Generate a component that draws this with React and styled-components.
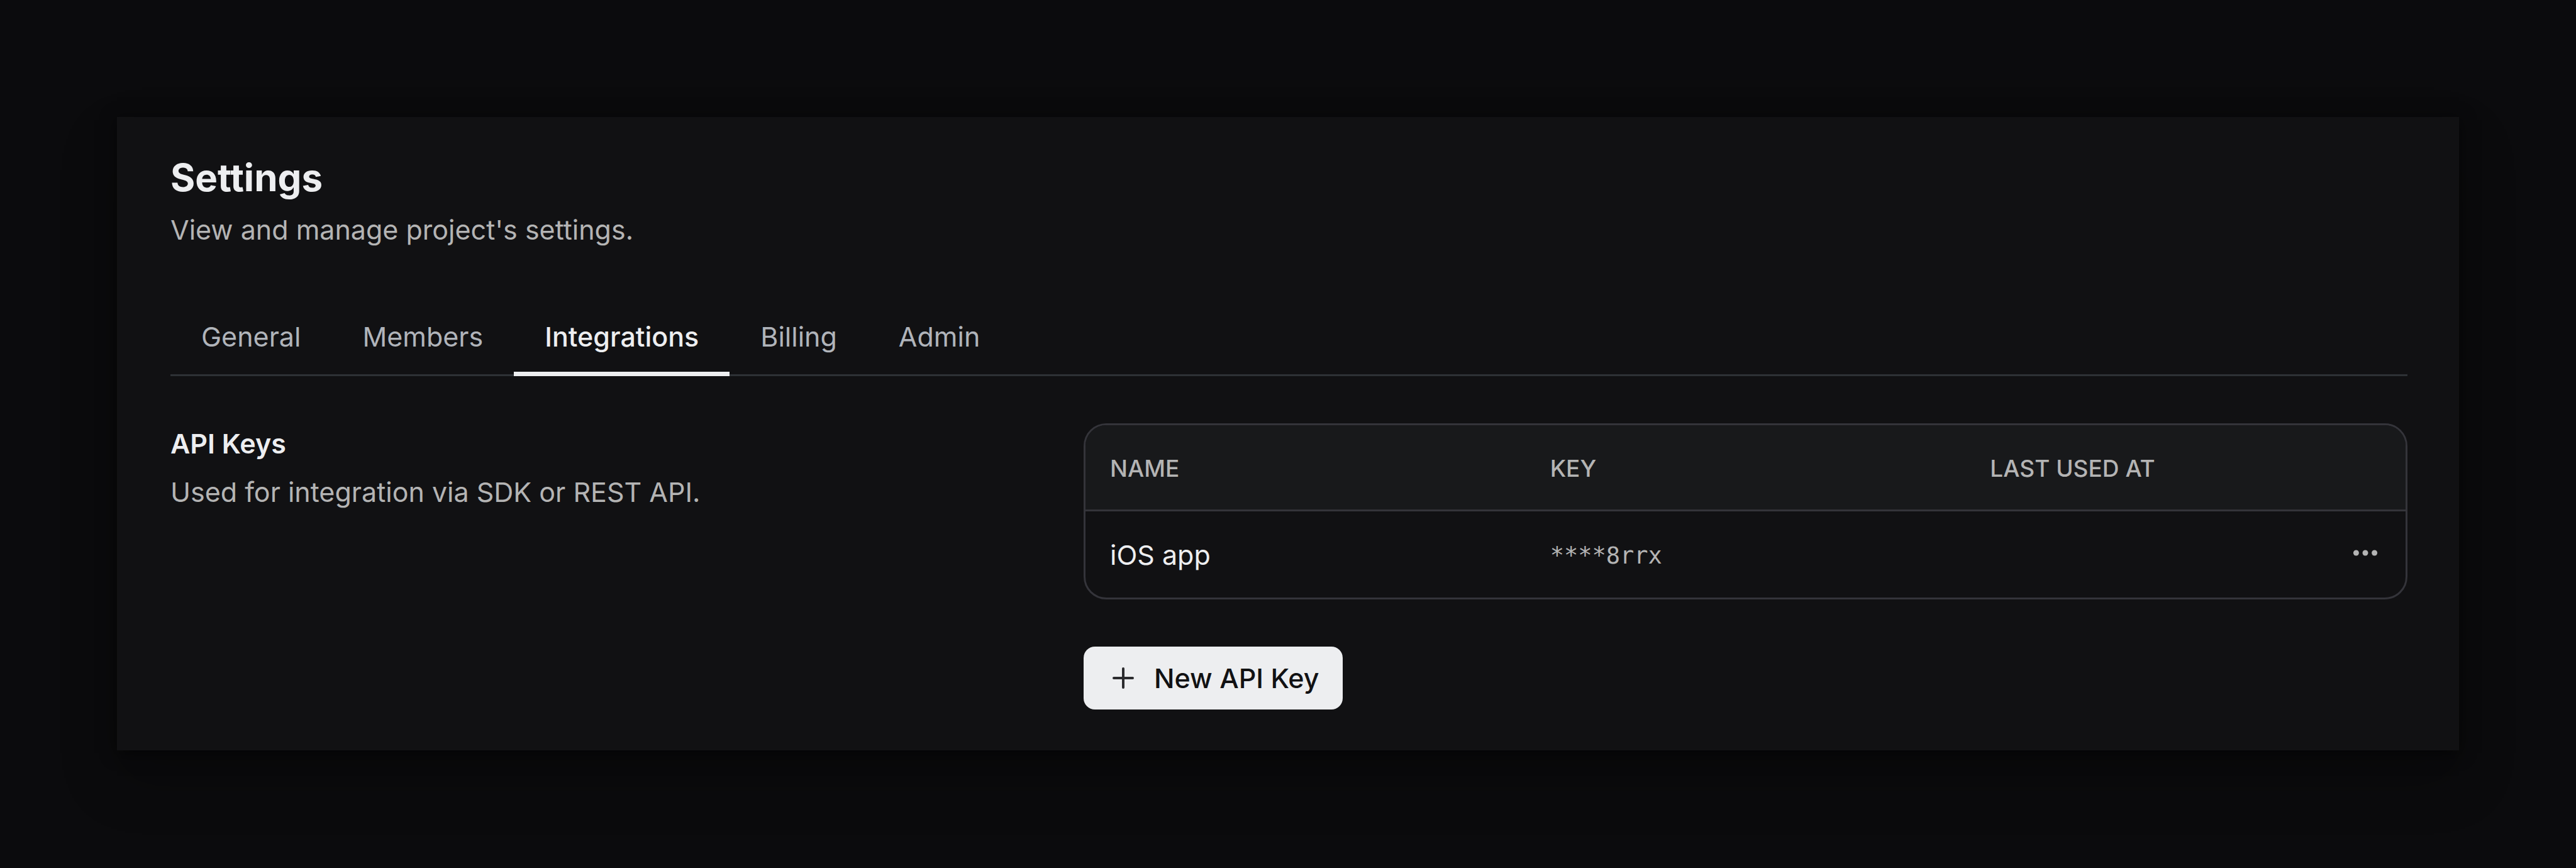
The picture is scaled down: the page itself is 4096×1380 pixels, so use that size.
import React from "react";
import styled, { createGlobalStyle } from "styled-components";

const GlobalStyle = createGlobalStyle`
  *, *::before, *::after { box-sizing: border-box; }
  body {
    margin: 0;
    background: #0b0b0d;
    color: #edeef0;
    font-family: Inter, "Liberation Sans", sans-serif;
    font-size: 43px;
    line-height: 64px;
  }
`;

const Page = styled.div`
  min-height: 100vh;
  padding: 186px;
`;

const Card = styled.main`
  padding: 58px 82px 65px 85px;
  background: #111113;
  box-shadow: 0 44px 80px rgba(0, 0, 0, 0.25), 0 4px 24px rgba(0, 0, 0, 0.5);
`;

const Title = styled.h1`
  margin: 0;
  font-size: 60px;
  line-height: 76px;
  font-weight: 700;
`;

const Muted = styled.p`
  margin: 13px 0 0;
  color: #b4b4b4;
`;

const Tabs = styled.nav`
  display: flex;
  margin-top: 82px;
  border-bottom: 3px solid #2e3135;
`;

const Tab = styled.a`
  margin-bottom: -3px;
  padding: 24px 49px;
  border-bottom: 7px solid ${(p) => (p.$active ? "#edeef0" : "transparent")};
  color: ${(p) => (p.$active ? "#edeef0" : "#b0b4ba")};
  font-weight: ${(p) => (p.$active ? 500 : 400)};
  text-decoration: none;
`;

const Section = styled.section`
  display: grid;
  grid-template-columns: 1452fr 2105fr;
  margin-top: 75px;
`;

const SectionTitle = styled.h2`
  margin: 0;
  font-size: 43px;
  line-height: 64px;
  font-weight: 600;
`;

const TableFrame = styled.div`
  overflow: hidden;
  border: 3px solid #34343a;
  border-radius: 36px;
`;

const Table = styled.table`
  width: 100%;
  table-layout: fixed;
  border-collapse: separate;
  border-spacing: 0;
`;

const HeadCell = styled.th`
  height: 137px;
  padding: 4px 39px 0;
  border-bottom: 3px solid #34343a;
  background: #18191b;
  color: #b4b4b4;
  font-size: 37px;
  font-weight: 500;
  text-align: left;
`;

const Cell = styled.td`
  height: 137px;
  padding: 0 39px;
`;

const Key = styled.code`
  color: #b4b4b4;
  font-family: "DejaVu Sans Mono", "Liberation Mono", monospace;
  font-size: 37px;
`;

const MenuButton = styled.button`
  display: block;
  margin-left: auto;
  padding: 0 0 6px;
  border: 0;
  background: none;
  color: #b4b4b4;
`;

const Icon = styled.svg`
  display: block;
  width: 50px;
  height: 50px;
`;

const PrimaryButton = styled.button`
  display: flex;
  align-items: center;
  gap: 24px;
  height: 100px;
  margin-top: 75px;
  padding: 0 38px;
  border: 0;
  border-radius: 18px;
  background: #edeef0;
  color: #111113;
  font: inherit;
  font-weight: 500;
`;

const tabs = ["General", "Members", "Integrations", "Billing", "Admin"];
const keys = [{ name: "iOS app", key: "****8rrx", lastUsed: "" }];

export default function App() {
  return (
    <Page>
      <GlobalStyle />
      <Card>
        <Title>Settings</Title>
        <Muted>View and manage project's settings.</Muted>
        <Tabs aria-label="Settings">
          {tabs.map((tab) => (
            <Tab
              key={tab}
              href={"#" + tab.toLowerCase()}
              $active={tab === "Integrations"}
            >
              {tab}
            </Tab>
          ))}
        </Tabs>
        <Section>
          <div>
            <SectionTitle>API Keys</SectionTitle>
            <Muted>Used for integration via SDK or REST API.</Muted>
          </div>
          <div>
            <TableFrame>
              <Table>
                <thead>
                  <tr>
                    <HeadCell>NAME</HeadCell>
                    <HeadCell>KEY</HeadCell>
                    <HeadCell>LAST USED AT</HeadCell>
                  </tr>
                </thead>
                <tbody>
                  {keys.map((row) => (
                    <tr key={row.key}>
                      <Cell>{row.name}</Cell>
                      <Cell>
                        <Key>{row.key}</Key>
                      </Cell>
                      <Cell>
                        {row.lastUsed}
                        <MenuButton aria-label="Key actions">
                          <Icon viewBox="0 0 50 50" fill="currentColor">
                            <circle cx="10.4" cy="25" r="4.5" />
                            <circle cx="25" cy="25" r="4.5" />
                            <circle cx="39.6" cy="25" r="4.5" />
                          </Icon>
                        </MenuButton>
                      </Cell>
                    </tr>
                  ))}
                </tbody>
              </Table>
            </TableFrame>
            <PrimaryButton>
              <Icon
                viewBox="0 0 50 50"
                fill="none"
                stroke="#2b2b2e"
                strokeWidth="4"
                strokeLinecap="round"
              >
                <path d="M25 10V40M10 25H40" />
              </Icon>
              New API Key
            </PrimaryButton>
          </div>
        </Section>
      </Card>
    </Page>
  );
}
